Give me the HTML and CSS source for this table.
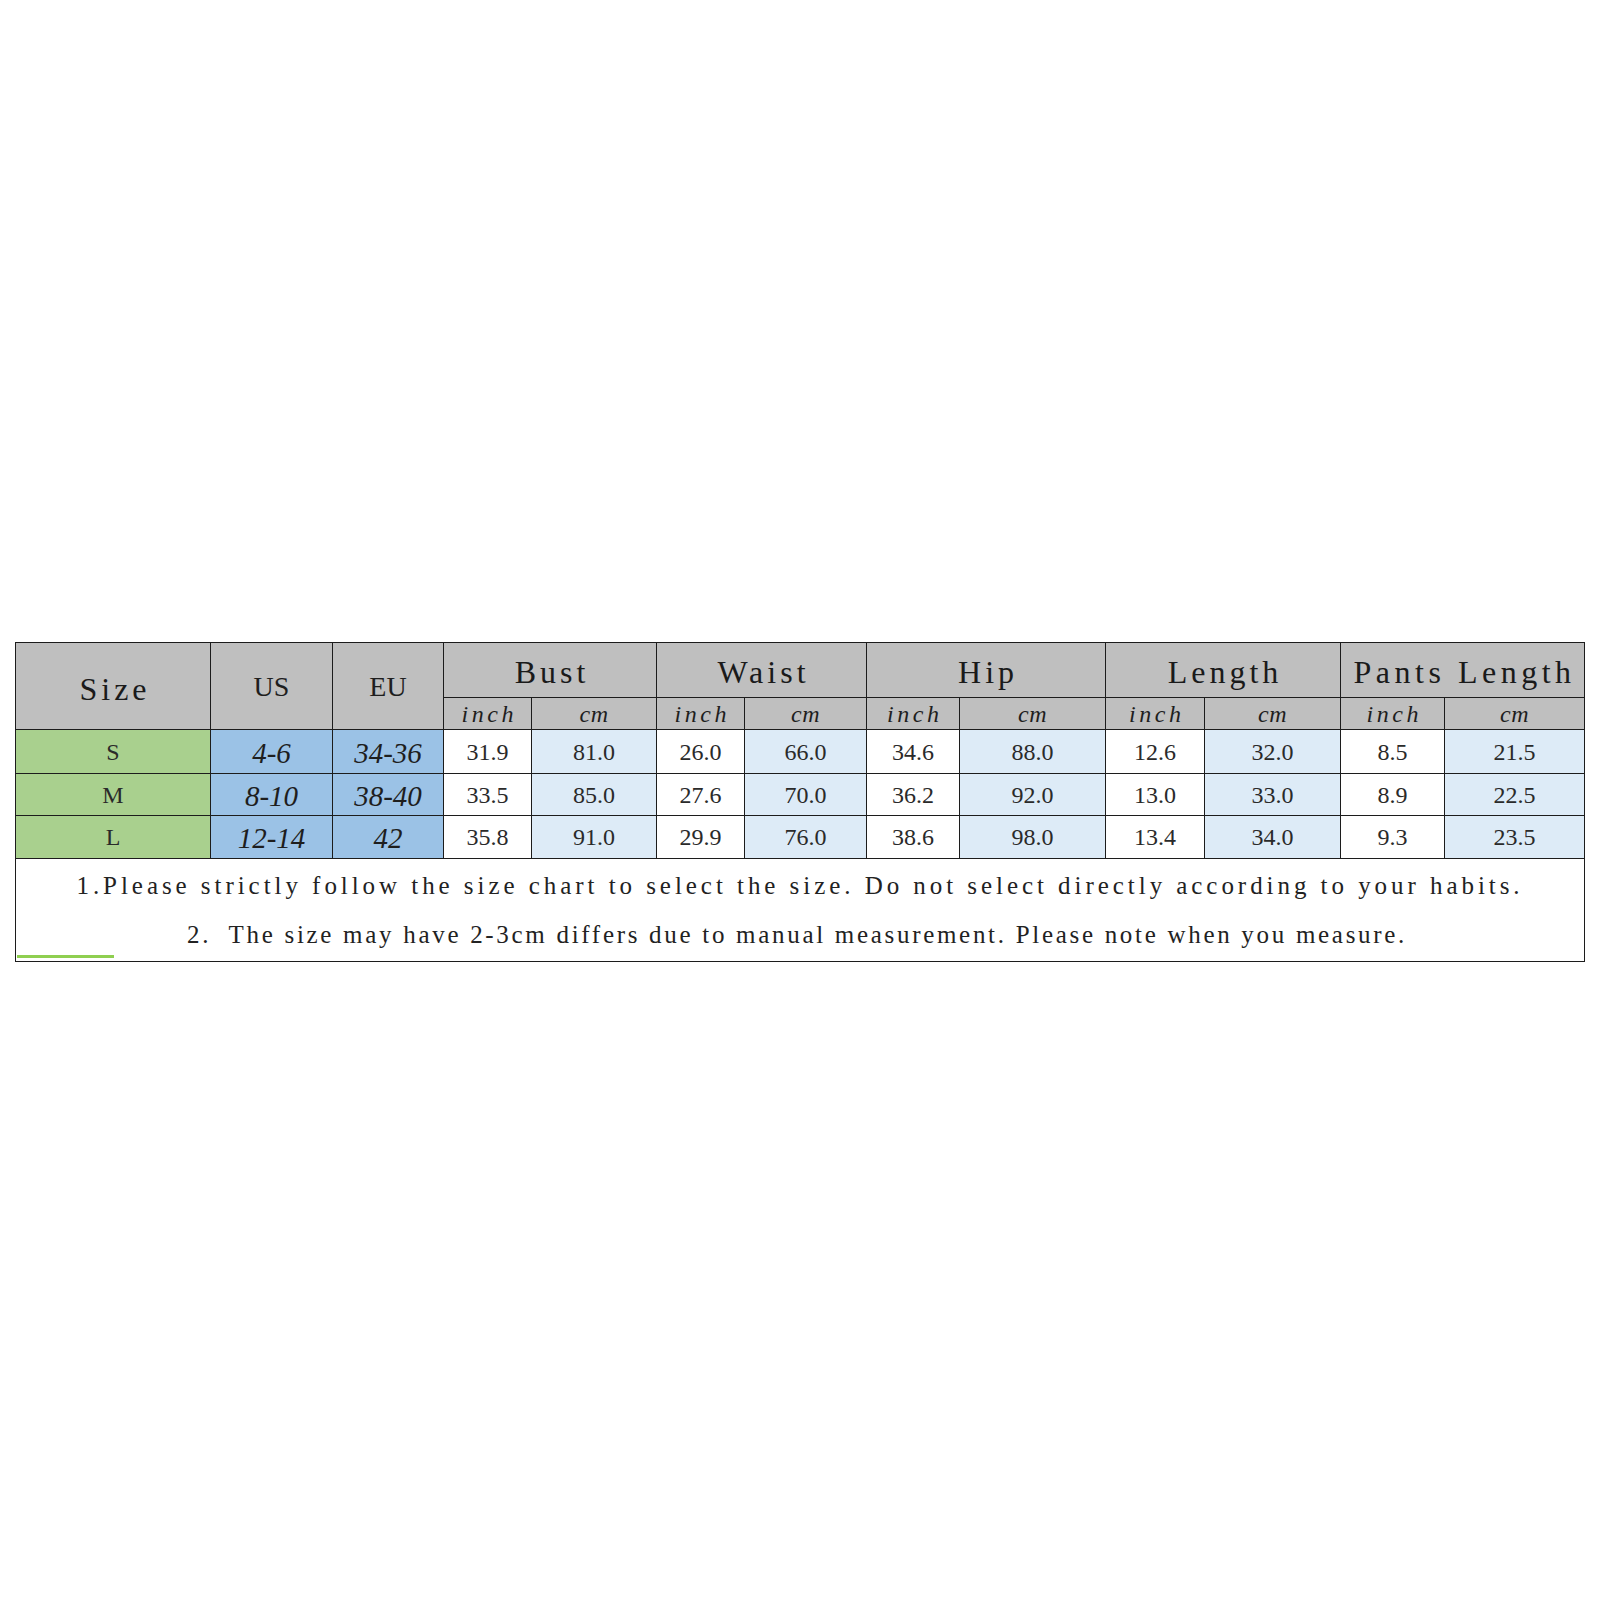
FILE: index.html
```html
<!DOCTYPE html>
<html>
<head>
<meta charset="utf-8">
<link rel="stylesheet" href="styles.css">
</head>
<body>
<div class="page">
  <table class="chart">
    <colgroup>
      <col class="c-size"><col class="c-us"><col class="c-eu">
      <col class="c-bi"><col class="c-bc">
      <col class="c-wi"><col class="c-wc">
      <col class="c-hi"><col class="c-hc">
      <col class="c-li"><col class="c-lc">
      <col class="c-pi"><col class="c-pc">
    </colgroup>
    <tr class="r-head1">
      <th rowspan="2" class="h-main h-size">Size</th>
      <th rowspan="2" class="h-serif">US</th>
      <th rowspan="2" class="h-serif">EU</th>
      <th colspan="2" class="h-main">Bust</th>
      <th colspan="2" class="h-main">Waist</th>
      <th colspan="2" class="h-main">Hip</th>
      <th colspan="2" class="h-main">Length</th>
      <th colspan="2" class="h-main h-pants">Pants Length</th>
    </tr>
    <tr class="r-head2">
      <th class="unit u-in">inch</th><th class="unit u-cm">cm</th>
      <th class="unit u-in">inch</th><th class="unit u-cm">cm</th>
      <th class="unit u-in">inch</th><th class="unit u-cm">cm</th>
      <th class="unit u-in">inch</th><th class="unit u-cm">cm</th>
      <th class="unit u-in">inch</th><th class="unit u-cm">cm</th>
    </tr>
    <tr class="r-s">
      <td class="sz">S</td><td class="reg">4-6</td><td class="reg">34-36</td>
      <td class="in">31.9</td><td class="cm">81.0</td>
      <td class="in">26.0</td><td class="cm">66.0</td>
      <td class="in">34.6</td><td class="cm">88.0</td>
      <td class="in">12.6</td><td class="cm">32.0</td>
      <td class="in">8.5</td><td class="cm">21.5</td>
    </tr>
    <tr class="r-m">
      <td class="sz">M</td><td class="reg">8-10</td><td class="reg">38-40</td>
      <td class="in">33.5</td><td class="cm">85.0</td>
      <td class="in">27.6</td><td class="cm">70.0</td>
      <td class="in">36.2</td><td class="cm">92.0</td>
      <td class="in">13.0</td><td class="cm">33.0</td>
      <td class="in">8.9</td><td class="cm">22.5</td>
    </tr>
    <tr class="r-l">
      <td class="sz">L</td><td class="reg">12-14</td><td class="reg">42</td>
      <td class="in">35.8</td><td class="cm">91.0</td>
      <td class="in">29.9</td><td class="cm">76.0</td>
      <td class="in">38.6</td><td class="cm">98.0</td>
      <td class="in">13.4</td><td class="cm">34.0</td>
      <td class="in">9.3</td><td class="cm">23.5</td>
    </tr>
    <tr class="r-notes">
      <td colspan="13" class="notes">
        <p class="note n1">1.Please strictly follow the size chart to select the size. Do not select directly according to your habits.</p>
        <p class="note n2">2.&nbsp; The size may have 2-3cm differs due to manual measurement. Please note when you measure.</p>
        <span class="green-line"></span>
      </td>
    </tr>
  </table>
</div>
</body>
</html>
```
FILE: styles.css
```css
html, body {
  margin: 0;
  padding: 0;
  background: #ffffff;
}

.page {
  padding: 642px 0 0 15px;
}

.chart {
  border-collapse: collapse;
  table-layout: fixed;
  width: 1569px;
  color: #1e1e1e;
}

.chart th,
.chart td {
  border: 1px solid #1c1c1c;
  padding: 0;
  text-align: center;
  vertical-align: middle;
  font-weight: normal;
  overflow: hidden;
  white-space: nowrap;
}

.c-size { width: 195px; }
.c-us { width: 122px; }
.c-eu { width: 111px; }
.c-bi { width: 88px; }
.c-bc { width: 125px; }
.c-wi { width: 88px; }
.c-wc { width: 122px; }
.c-hi { width: 93px; }
.c-hc { width: 146px; }
.c-li { width: 99px; }
.c-lc { width: 136px; }
.c-pi { width: 104px; }
.c-pc { width: 140px; }

.r-head1 { height: 55px; }
.r-head2 { height: 32px; }
.r-s { height: 44px; }
.r-m { height: 42px; }
.r-l { height: 43px; }
.r-notes { height: 103px; }

.chart th {
  background: #bfbfbf;
}

.h-main {
  font-family: "Liberation Serif", serif;
  font-size: 32px;
  letter-spacing: 4px;
  text-indent: 4px;
  line-height: 1;
  padding-top: 4px !important;
  color: #1a1a1a;
}

.h-size {
  padding-top: 6px !important;
}

.h-pants {
  letter-spacing: 4.5px;
}

.h-serif {
  font-family: "Liberation Serif", serif;
  font-size: 28px;
  line-height: 1;
  padding-top: 2px !important;
}

.unit {
  font-family: "Liberation Serif", serif;
  font-style: italic;
  font-size: 24px;
  line-height: 1;
  vertical-align: bottom !important;
  padding-bottom: 3px !important;
}

.u-in {
  letter-spacing: 3.5px;
  text-indent: 3.5px;
}

.u-cm {
  letter-spacing: 0.5px;
}

.sz {
  background: #a9d08e;
  font-family: "Liberation Serif", serif;
  font-size: 24px;
  line-height: 1;
  color: #2a2a2a;
}

.reg {
  background: #9bc2e6;
  font-family: "Liberation Serif", serif;
  font-style: italic;
  font-size: 29px;
  line-height: 1;
  padding-top: 3px !important;
}

.in {
  background: #ffffff;
  font-family: "Liberation Serif", serif;
  font-size: 24px;
  line-height: 1;
  color: #2a2a2a;
}

.cm {
  background: #ddebf7;
  font-family: "Liberation Serif", serif;
  font-size: 24px;
  line-height: 1;
  color: #2a2a2a;
}

.notes {
  position: relative;
  background: #ffffff;
  vertical-align: top !important;
}

.note {
  margin: 0;
  font-family: "Liberation Serif", serif;
  font-size: 25px;
  line-height: 1;
  color: #222222;
  text-align: center;
}

.n1 {
  margin-top: 14px;
  letter-spacing: 3.95px;
}

.n2 {
  margin-top: 24px;
  letter-spacing: 2.7px;
  padding-right: 6px;
}

.green-line {
  position: absolute;
  left: 1px;
  bottom: 3px;
  width: 97px;
  height: 3px;
  background: #8fcf50;
}
```
